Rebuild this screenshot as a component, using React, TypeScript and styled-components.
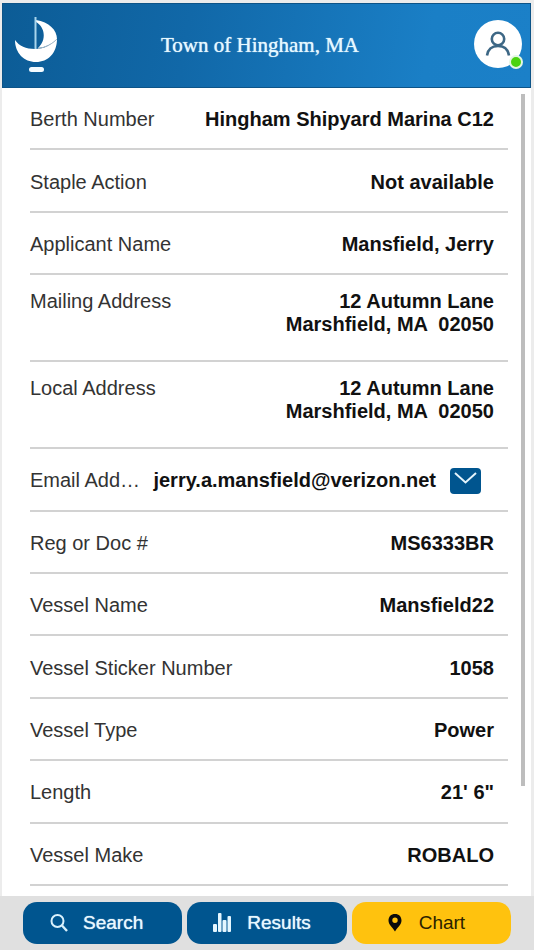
import React from "react";
import styled, { createGlobalStyle } from "styled-components";

const sans = `"Liberation Sans", Arial, sans-serif`;

const GlobalStyle = createGlobalStyle`
  *, *::before, *::after { box-sizing: border-box; }
  body { margin: 0; background: #ececec; font-family: ${sans}; }
`;

const Screen = styled.div`
  display: flex;
  flex-direction: column;
  min-height: 100vh;
`;

const Frame = styled.div`
  display: flex;
  flex-direction: column;
  flex: 1;
  margin: 3px 3px 0 2px;
  background: #ffffff;
`;

const Header = styled.header`
  display: grid;
  grid-template-columns: 44px 1fr 60px;
  align-items: center;
  height: 85px;
  padding: 0 8px 3px 11px;
  background: linear-gradient(100deg, #0c5c96 0%, #1168a8 35%, #1a7fc6 80%, #1b80c8 100%);
  border: 1px solid #0d5488;
`;

const Title = styled.h1`
  margin: 0;
  padding-top: 2px;
  font-family: "Liberation Serif", "Times New Roman", serif;
  font-size: 21px;
  line-height: 24px;
  font-weight: 400;
  text-align: center;
  color: #e6f8ff;
  text-shadow: 0 0 1px #e6f8ff;
`;

const ProfileButton = styled.button`
  position: relative;
  width: 48px;
  height: 48px;
  padding: 0;
  border: 0;
  border-radius: 50%;
  background: #ffffff;
  justify-self: end;
  cursor: pointer;
  svg { display: block; }
`;

const OnlineDot = styled.span`
  position: absolute;
  right: -1px;
  bottom: -1px;
  width: 14px;
  height: 14px;
  border: 2px solid #e4f6e4;
  border-radius: 50%;
  background: #4bd30f;
`;

const Body = styled.main`
  display: flex;
  flex: 1;
  gap: 13px;
  padding: 0 6px 0 28px;
`;

const Details = styled.dl`
  display: flex;
  flex-direction: column;
  flex: 1;
  min-width: 0;
  margin: 0;
  padding-bottom: 10px;
`;

const Row = styled.div<{ $tall?: boolean; $action?: boolean }>`
  display: flex;
  flex: ${(p) => (p.$tall ? "0 0 87px" : "1 0 60px")};
  align-items: ${(p) => (p.$tall ? "flex-start" : "center")};
  justify-content: space-between;
  gap: 10px;
  padding: ${(p) => (p.$tall ? "15px" : "3px")} ${(p) => (p.$action ? "27px" : "14px")} 0 0;
  border-bottom: 2px solid #d2d2d2;
  font-size: 20px;
  line-height: 23px;
`;

const Label = styled.dt`
  white-space: nowrap;
  color: #333333;
`;

const Value = styled.dd`
  display: flex;
  flex-shrink: 0;
  align-items: center;
  gap: 14px;
  margin: 0;
  font-weight: 700;
  text-align: right;
  white-space: pre-line;
  color: #111111;
`;

const MailLink = styled.a`
  display: block;
  svg { display: block; }
`;

const ScrollThumb = styled.div`
  flex: none;
  width: 4px;
  height: 692px;
  margin-top: 6px;
  background: #bdbdbd;
`;

const Footer = styled.nav`
  display: grid;
  grid-template-columns: repeat(3, 1fr);
  gap: 5px;
  padding: 6px 23px;
  background: #e0e0e0;
`;

const NavButton = styled.button<{ $accent?: boolean }>`
  display: flex;
  align-items: center;
  gap: 14px;
  height: 42px;
  padding: 0 0 0 ${(p) => (p.$accent ? "33px" : "26px")};
  border: 0;
  border-radius: 14px;
  background: ${(p) => (p.$accent ? "#ffc20e" : "#00558f")};
  color: ${(p) => (p.$accent ? "#2b2200" : "#e9f8ff")};
  font-family: ${sans};
  font-size: 19px;
  line-height: 24px;
  text-shadow: ${(p) => (p.$accent ? "none" : "0 0 1px #e9f8ff")};
  cursor: pointer;
  svg { flex: none; }
`;

const BoatLogo = () => (
  <svg width="44" height="58" viewBox="0 0 44 58" role="img" aria-label="Sailboat">
    <path d="M1 25C5 31 12 34 21 34C30 34 37 30 43 24C43 38 34 47 22 47C10 47 1 38 1 25Z" fill="#fff" />
    <path d="M22 5C35 7 43 15 43 24C38 29 32 32 24 33C33 25 31 12 22 7Z" fill="#fff" />
    <path d="M24 33.5C32 32.500 38 29 43 24" fill="none" stroke="#a9bccb" strokeWidth="1" />
    <path d="M21.500 2V34" stroke="#a8d5ec" strokeWidth="2" />
    <rect x="15" y="52" width="15" height="5" rx="2.500" fill="#f4fbff" />
  </svg>
);

const UserIcon = () => (
  <svg width="48" height="48" viewBox="0 0 48 48" fill="none" stroke="#3d6785" strokeWidth="2.600" aria-hidden="true">
    <circle cx="24" cy="19" r="6.200" />
    <path d="M13 35.500C14 29 18 26 24 26S34 29 35 35.500" />
  </svg>
);

const MailIcon = () => (
  <svg width="31" height="26" viewBox="0 0 31 26" aria-hidden="true">
    <rect width="31" height="26" rx="4" fill="#00558f" />
    <path d="M5 5L15.500 14.500L26 5" fill="none" stroke="#e4f4fc" strokeWidth="2" />
  </svg>
);

const SearchIcon = () => (
  <svg width="20" height="20" viewBox="0 0 20 20" fill="none" stroke="#d9f1fc" strokeWidth="2" aria-hidden="true">
    <circle cx="8.500" cy="8" r="6" />
    <path d="M13 12.500L18 18" strokeWidth="2.400" />
  </svg>
);

const BarsIcon = () => (
  <svg width="20" height="20" viewBox="0 0 20 20" fill="#e4f6ff" aria-hidden="true">
    <rect x="0" y="11" width="4" height="8" rx="1" />
    <rect x="5" y="0" width="3.500" height="19" rx="1" />
    <rect x="9.500" y="7" width="4" height="12" rx="1" />
    <rect x="14.500" y="3" width="3.500" height="16" rx="1" />
  </svg>
);

const PinIcon = () => (
  <svg width="20" height="20" viewBox="0 0 20 20" aria-hidden="true">
    <path
      d="M10 1C6 1 3.500 3.700 3.500 7.500C3.500 11.800 7.500 14 10 18.500C12.500 14 16.500 11.800 16.500 7.500C16.500 3.700 14 1 10 1ZM10 4.500A2.700 2.700 0 1 1 10 9.900A2.700 2.700 0 1 1 10 4.500Z"
      fill="#0b0b0b"
      fillRule="evenodd"
    />
  </svg>
);

type Field = { label: string; value: string; kind?: "address" | "email" };

const address = "12 Autumn Lane\nMarshfield, MA \u00a002050";

const fields: Field[] = [
  { label: "Berth Number", value: "Hingham Shipyard Marina C12" },
  { label: "Staple Action", value: "Not available" },
  { label: "Applicant Name", value: "Mansfield, Jerry" },
  { label: "Mailing Address", value: address, kind: "address" },
  { label: "Local Address", value: address, kind: "address" },
  { label: "Email Add…", value: "jerry.a.mansfield@verizon.net", kind: "email" },
  { label: "Reg or Doc #", value: "MS6333BR" },
  { label: "Vessel Name", value: "Mansfield22" },
  { label: "Vessel Sticker Number", value: "1058" },
  { label: "Vessel Type", value: "Power" },
  { label: "Length", value: "21' 6\"" },
  { label: "Vessel Make", value: "ROBALO" },
];

export default function App() {
  return (
    <Screen>
      <GlobalStyle />
      <Frame>
        <Header>
          <BoatLogo />
          <Title>Town of Hingham, MA</Title>
          <ProfileButton type="button" aria-label="Profile">
            <UserIcon />
            <OnlineDot />
          </ProfileButton>
        </Header>
        <Body>
          <Details>
            {fields.map(({ label, value, kind }) => (
              <Row key={label} $tall={kind === "address"} $action={kind === "email"}>
                <Label>{label}</Label>
                <Value>
                  {value}
                  {kind === "email" && (
                    <MailLink href={`mailto:${value}`} aria-label="Send email">
                      <MailIcon />
                    </MailLink>
                  )}
                </Value>
              </Row>
            ))}
          </Details>
          <ScrollThumb />
        </Body>
      </Frame>
      <Footer>
        <NavButton type="button">
          <SearchIcon />
          Search
        </NavButton>
        <NavButton type="button">
          <BarsIcon />
          Results
        </NavButton>
        <NavButton type="button" $accent>
          <PinIcon />
          Chart
        </NavButton>
      </Footer>
    </Screen>
  );
}
